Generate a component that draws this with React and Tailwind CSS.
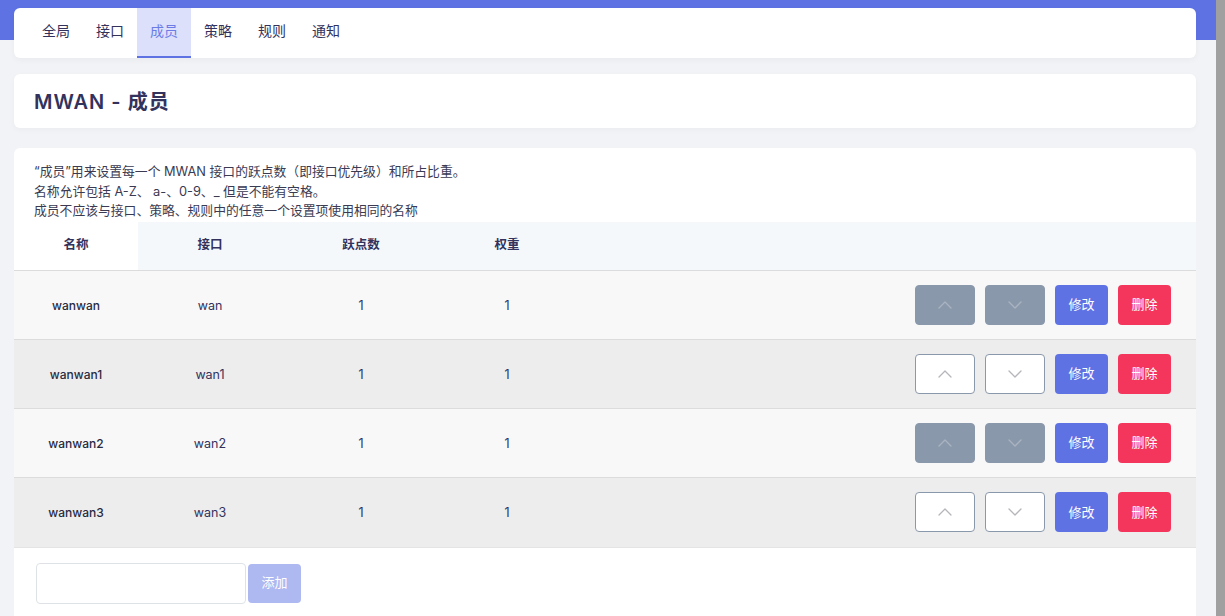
import React from 'react';
import { ChevronUp, ChevronDown } from 'lucide-react';

const tabs = ['全局', '接口', '成员', '策略', '规则', '通知'];

const members = [
  { name: 'wanwan', iface: 'wan', metric: '1', weight: '1', locked: true },
  { name: 'wanwan1', iface: 'wan1', metric: '1', weight: '1', locked: false },
  { name: 'wanwan2', iface: 'wan2', metric: '1', weight: '1', locked: true },
  { name: 'wanwan3', iface: 'wan3', metric: '1', weight: '1', locked: false },
];

const MoveButton = ({ locked, children }) => (
  <button
    className={`w-[60px] h-[40px] rounded flex items-center justify-center border ${
      locked ? 'bg-[#8a98ab] border-[#8a98ab] text-[#aab4c1]' : 'bg-white border-[#8a98ab] text-[#b5b5bb]'
    }`}
  >
    {children}
  </button>
);

export default function App() {
  return (
    <div
      className="flex h-screen overflow-hidden bg-[#f2f3f6]"
      style={{ fontFamily: 'Inter, "Noto Sans CJK SC", sans-serif' }}
    >
      <div className="flex-1 flex flex-col min-w-0">
        {/* purple band sits behind the tab card */}
        <div className="bg-[#5e72e4] h-[40px] shrink-0" />
        <div className="-mt-[32px] px-[14px] pr-[20px] flex flex-col">
          {/* Tabs */}
          <div className="bg-white rounded-md shadow-[0_2px_6px_rgba(0,0,0,0.04)] h-[50px] flex items-stretch pl-[15px]">
            {tabs.map((t) => (
              <div
                key={t}
                className={`px-[13px] pb-[3px] flex items-center text-[14px] border-b-2 ${
                  t === '成员'
                    ? 'bg-[#dce0fb] text-[#6c7ce6] border-[#5e72e4]'
                    : 'text-[#32325d] border-transparent'
                }`}
              >
                {t}
              </div>
            ))}
          </div>

          {/* Title */}
          <div className="bg-white rounded-md mt-[16px] h-[54px] flex items-center px-[20px] shadow-[0_2px_6px_rgba(0,0,0,0.03)]">
            <h2 className="text-[20px] font-semibold text-[#32325d] tracking-[0.05em] pt-[2px]">MWAN - 成员</h2>
          </div>

          {/* Main card */}
          <div className="bg-white rounded-t-md mt-[20px] pt-[14px]">
            <div className="px-[20px] text-[12.8px] leading-[19.5px] text-[#3a3a52]">
              <div>“成员”用来设置每一个 MWAN 接口的跃点数（即接口优先级）和所占比重。</div>
              <div>名称允许包括 A-Z、 a-、0-9、_ 但是不能有空格。</div>
              <div>成员不应该与接口、策略、规则中的任意一个设置项使用相同的名称</div>
            </div>

            <table className="w-full mt-[1px] border-collapse text-[12.5px] text-[#32325d]">
              <thead>
                <tr className="h-[49px] bg-[#f5f8fb]">
                  <th className="w-[124px] bg-white font-semibold">名称</th>
                  <th className="w-[144px] font-semibold">接口</th>
                  <th className="w-[158px] font-semibold">跃点数</th>
                  <th className="w-[134px] font-semibold">权重</th>
                  <th />
                </tr>
              </thead>
              <tbody>
                {members.map((m, i) => (
                  <tr
                    key={m.name}
                    className={`h-[69px] border-t border-[#dcdcdc] ${i % 2 === 0 ? 'bg-[#f8f8f8]' : 'bg-[#ededed]'}`}
                  >
                    <td className="text-center text-[12px] font-medium text-[#2a2a40] pt-[2px]">{m.name}</td>
                    <td className="text-center pt-[2px]">{m.iface}</td>
                    <td className="text-center pt-[2px]">{m.metric}</td>
                    <td className="text-center pt-[2px]">{m.weight}</td>
                    <td className="pr-[25px]">
                      <div className="flex justify-end gap-[10px]">
                        <MoveButton locked={m.locked}>
                          <ChevronUp size={24} strokeWidth={1.3} />
                        </MoveButton>
                        <MoveButton locked={m.locked}>
                          <ChevronDown size={24} strokeWidth={1.3} />
                        </MoveButton>
                        <button className="w-[53px] h-[40px] rounded bg-[#5e72e4] text-white text-[13px]">修改</button>
                        <button className="w-[53px] h-[40px] rounded bg-[#f5365c] text-white text-[13px]">删除</button>
                      </div>
                    </td>
                  </tr>
                ))}
              </tbody>
            </table>

            <div className="flex items-center gap-[2px] px-[22px] pt-[15px] pb-[16px] border-t border-[#e4e4e4]">
              <input className="w-[210px] h-[41px] border border-[#dee2e6] rounded text-[13px] px-2 outline-none" />
              <button className="w-[53px] h-[39px] rounded bg-[#aeb8f1] text-white text-[13px]">添加</button>
            </div>
          </div>
        </div>
      </div>
      {/* scrollbar strip */}
      <div className="w-[9px] shrink-0 bg-[#a0a0a0]" />
    </div>
  );
}
